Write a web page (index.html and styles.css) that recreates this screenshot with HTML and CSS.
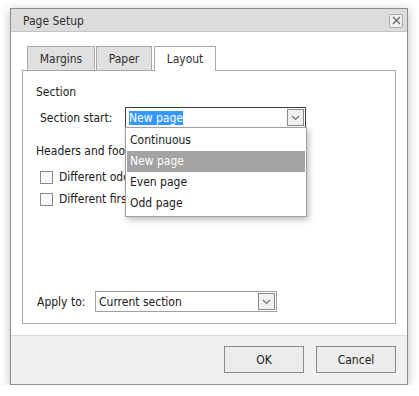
FILE: index.html
```html
<!DOCTYPE html>
<html lang="en">
  <head>
    <meta charset="UTF-8" />
    <title>Page Setup</title>
    <link rel="stylesheet" href="styles.css">
  </head>
  <body>
    <div class="dialog">
      <div class="dialog-header">
        <span class="dialog-title">Page Setup</span>
        <span class="close-btn">
          <svg width="9" height="9" viewBox="0 0 9 9"><path d="M1 1L8 8M8 1L1 8" stroke="#6b6b6b" stroke-width="1.4"/></svg>
        </span>
      </div>
      <div class="dialog-body">
        <div class="tabs">
          <span class="tab tab-margins">Margins</span>
          <span class="tab tab-paper">Paper</span>
          <span class="tab tab-active">Layout</span>
        </div>
        <div class="tab-panel">
          <div class="group-title">Section</div>
          <div class="row row-start">
            <span class="label">Section start:</span>
            <div class="combo combo-focused">
              <span class="combo-text"><span class="selected-text">New page</span></span>
              <span class="combo-btn">
                <svg width="9" height="6" viewBox="0 0 9 6"><path d="M1 1L4.5 4.5L8 1" fill="none" stroke="#707070" stroke-width="1.2"/></svg>
              </span>
              <ul class="combo-list">
                <li>Continuous</li>
                <li class="item-selected">New page</li>
                <li>Even page</li>
                <li>Odd page</li>
              </ul>
            </div>
          </div>
          <div class="group-title group-headers">Headers and footers</div>
          <label class="check check-first"><span class="check-box"></span>Different odd and even</label>
          <label class="check"><span class="check-box"></span>Different first page</label>
          <div class="row row-apply">
            <span class="label">Apply to:</span>
            <div class="combo combo-apply">
              <span class="combo-text">Current section</span>
              <span class="combo-btn">
                <svg width="9" height="6" viewBox="0 0 9 6"><path d="M1 1L4.5 4.5L8 1" fill="none" stroke="#707070" stroke-width="1.2"/></svg>
              </span>
            </div>
          </div>
        </div>
      </div>
      <div class="dialog-footer">
        <button class="btn">OK</button>
        <button class="btn">Cancel</button>
      </div>
    </div>
  </body>
</html>
```

FILE: styles.css
```css
* {
  box-sizing: border-box;
  margin: 0;
  padding: 0;
}

body {
  background-color: #ffffff;
  font-family: "DejaVu Sans Condensed", "DejaVu Sans", sans-serif;
  font-size: 12px;
  color: #202020;
}

/*DIALOG*/
.dialog {
  margin: 8px 0 0 10px;
  width: 398px;
  border: 1px solid #8c8c8c;
  background-color: #ffffff;
  box-shadow: 0 2px 10px rgba(0, 0, 0, 0.25);
}

.dialog-header {
  display: flex;
  align-items: center;
  justify-content: space-between;
  height: 23px;
  padding: 1px 4px 0 12px;
  background-color: #dcdcdc;
  border-bottom: 1px solid #c4c4c4;
}

.dialog-title {
  color: #303030;
}

.close-btn {
  display: flex;
  align-items: center;
  justify-content: center;
  width: 14px;
  height: 14px;
  border: 1px solid #a8a8a8;
  border-radius: 2px;
  background-color: #f0f0f0;
}

.dialog-body {
  padding: 14px 11px 11px 11px;
}

/*TABS*/
.tabs {
  display: flex;
  gap: 1px;
  padding-left: 5px;
  height: 24px;
  align-items: flex-end;
}

.tab {
  display: flex;
  align-items: center;
  justify-content: center;
  height: 24px;
  border: 1px solid #a8a8a8;
  border-bottom: none;
  background-color: #e0e0e0;
  color: #303030;
}

.tab-margins {
  width: 68px;
}

.tab-paper {
  width: 56px;
}

.tab-active {
  position: relative;
  width: 62px;
  height: 25px;
  margin-bottom: -1px;
  margin-left: 1px;
  background-color: #ffffff;
}

.tab-panel {
  display: flex;
  flex-direction: column;
  height: 254px;
  border: 1px solid #a8a8a8;
  padding: 11px 14px 11px 13px;
}

.group-title {
  line-height: 20px;
}

.row {
  display: flex;
  align-items: center;
}

.row-start {
  margin-top: 5px;
  padding-left: 4px;
}

.row-start .label {
  width: 85px;
}

/*COMBO*/
.combo {
  position: relative;
  display: flex;
  align-items: center;
  height: 21px;
  width: 181px;
  border: 1px solid #a0a0a0;
  padding: 1px;
}

.combo-focused {
  border-color: #3c3c3c;
}

.combo-text {
  flex: 1;
  padding-left: 2px;
}

.selected-text {
  background-color: #3399ff;
  color: #ffffff;
}

.combo-btn {
  display: flex;
  align-items: center;
  justify-content: center;
  width: 17px;
  height: 17px;
  border: 1px solid #8a8a8a;
  background-color: #f0f0f0;
}

.combo-list {
  position: absolute;
  left: -1px;
  top: 19px;
  width: 182px;
  list-style: none;
  background-color: #ffffff;
  border: 1px solid #a0a0a0;
  padding: 2px 1px;
  box-shadow: 2px 3px 6px rgba(0, 0, 0, 0.25);
  z-index: 2;
}

.combo-list li {
  height: 21px;
  line-height: 21px;
  padding-left: 3px;
}

.combo-list .item-selected {
  background-color: #a3a3a3;
  color: #ffffff;
}

.group-headers {
  margin-top: 13px;
}

.check {
  display: flex;
  align-items: center;
  gap: 6px;
  margin-top: 6px;
  padding-left: 4px;
  height: 16px;
}

.check-first {
  margin-top: 8px;
}

.check-box {
  width: 13px;
  height: 13px;
  border: 1px solid #8a8a8a;
  background-color: #f8f8f8;
}

.row-apply {
  margin-top: auto;
  padding-left: 1px;
}

.row-apply .label {
  width: 58px;
}

.combo-apply {
  width: 182px;
}

/*FOOTER*/
.dialog-footer {
  display: flex;
  justify-content: flex-end;
  gap: 12px;
  padding: 10px 11px 11px 0;
  background-color: #f0f0f0;
  border-top: 1px solid #dadada;
}

.btn {
  width: 80px;
  height: 27px;
  border: 1px solid #8a8a8a;
  background-color: #ececec;
  font-family: "DejaVu Sans Condensed", "DejaVu Sans", sans-serif;
  font-size: 12px;
  color: #202020;
}
```
